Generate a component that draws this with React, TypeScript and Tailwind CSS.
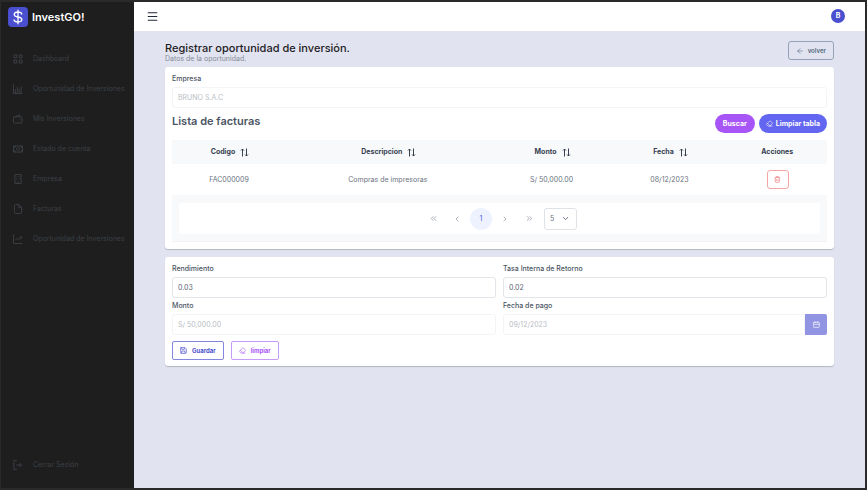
import type { ReactNode } from "react";
import {
  ArrowLeft, ChevronDown, ChevronLeft, ChevronRight, ChevronsLeft, ChevronsRight, Eraser, Menu,
} from "lucide-react";

const icons = {
  grid: "M1 1h3v3H1zM6.500 1h3v3h-3zM1 6.500h3v3H1zM6.500 6.500h3v3h-3z",
  bars: "M.5.500v9.500H10M2.500 9.500V5.500M4.500 9.500V3M6.500 9.500V5M8.500 9.500V2.500",
  wallet: "M1.500 3h7q1 0 1 1v4.500q0 1-1 1h-7q-1 0-1-1V4q0-1 1-1L7 1v2M7 6h1",
  money: "M.5 2h9.500v6.500H.5zM.5 4q2 0 2-2M10 4Q8 4 8 2M.5 6.500q2 0 2 2M10 6.500q-2 0-2 2M5.200 3.700a1.500 1.500 0 1 0 .1 0",
  building: "M2 .5h6.500V10H2zM4 2.500v1M6.500 2.500v1M4 4.700v1M6.500 4.700v1M5.200 7.500V10",
  file: "M2.500.500H6L9 3.500v5q0 1.500-1 1.500H2.500q-1 0-1-1V1.500q0-1 1-1M6 .5v3h3",
  trend: "M.5.500v9.500H10M2.500 6.500l2-2 1.500 1.500L9 3M7 3h2v2",
  exit: "M4 .5H1v9.500h3M3.500 5.200h5.500M7 3.200l2 2-2 2",
  calendar: "M1.500 2h7q1 0 1 1v5.500q0 1-1 1h-7q-1 0-1-1V3q0-1 1-1M.5 5h9M3 .5v2.500M7 .5v2.500",
  save: "M1.500.500H7L9.500 3v5.500q0 1-1 1h-7q-1 0-1-1v-7q0-1 1-1M2.500.500v3h4v-3M2.500 9.500V6h5v3.500",
  trash: "M1 2.500h8M3.500 2.500V.8h3v1.700M2 2.500v6q0 1 1 1h4q1 0 1-1v-6M4 5v2.500M6 5v2.500",
};

function Icon({ name, className, stroke = 1 }: { name: keyof typeof icons; className: string; stroke?: number }) {
  return (
    <svg viewBox="0 0 10.500 10.500" className={className} fill="none" stroke="currentColor" strokeWidth={stroke} strokeLinejoin="round" aria-hidden="true">
      <path d={icons[name]} />
    </svg>
  );
}

const nav: { label: string; icon: keyof typeof icons }[] = [
  { label: "Dashboard", icon: "grid" },
  { label: "Oportunidad de Inversiones", icon: "bars" },
  { label: "Mis Inversiones", icon: "wallet" },
  { label: "Estado de cuenta", icon: "money" },
  { label: "Empresa", icon: "building" },
  { label: "Facturas", icon: "file" },
  { label: "Oportunidad de Inversiones", icon: "trend" },
];

const columns = [
  { label: "Codigo", width: "w-[17.4%]", sortable: true },
  { label: "Descripcion", width: "w-[31.1%]", sortable: true },
  { label: "Monto", width: "w-[18.9%]", sortable: true },
  { label: "Fecha", width: "w-[17.1%]", sortable: true },
  { label: "Acciones", width: "w-[15.5%]", sortable: false },
];

function SortIcon() {
  return (
    <svg viewBox="0 0 9 9" className="size-[9px]" fill="none" stroke="#374151" strokeWidth="1" aria-hidden="true">
      <path d="M2.500 8.500V1M1 2.500 2.500 1 4 2.500M6.500.500V8M5 6.500 6.500 8 8 6.500" />
    </svg>
  );
}

function Field({ id, label, value, disabled, children }: {
  id: string; label: string; value: string; disabled?: boolean; children?: ReactNode;
}) {
  return (
    <div className="flex min-w-0 flex-col gap-[3px]">
      <label htmlFor={id} className="text-[7px] leading-[10px] font-medium text-[#4b5563]">{label}</label>
      <div className="flex h-[21px]">
        <input
          id={id}
          defaultValue={value}
          disabled={disabled}
          className="h-full min-w-0 flex-1 rounded-[3px] border border-[#e2e5e9] bg-white px-[5px] text-[7px] text-[#5b6472] disabled:border-[#f3f4f6] disabled:text-[#b9bdc4]"
        />
        {children}
      </div>
    </div>
  );
}

const pageButton = "flex size-[22px] items-center justify-center rounded-full text-[#8b939f]";

export default function App() {
  return (
    <div className="flex min-h-screen border-y-2 border-r-2 border-l border-[#2a2a2a] bg-[#e1e4f0] font-['Inter','Liberation_Sans',sans-serif] text-[7px] leading-[10px] text-[#6b7280]">
      <aside className="flex w-[133px] shrink-0 flex-col bg-[#1e1e1e] text-[#3c4046]">
        <div className="flex h-[29px] items-center gap-1 pl-[7px]">
          <svg viewBox="0 0 20 20" className="size-5" fill="none" aria-hidden="true">
            <rect width="20" height="20" rx="4" fill="#4a4fcf" />
            <path d="M13.800 7C13.500 5.700 12 5 10 5c-2.300 0-3.800.9-3.800 2.400 0 3.600 7.700 1.600 7.700 5.200 0 1.500-1.600 2.400-3.900 2.400-2.200 0-3.700-.8-4-2.200M10 3.200v13.600" stroke="white" strokeWidth="1.300" strokeLinecap="round" />
          </svg>
          <span className="text-[11px] leading-4 font-semibold text-white">InvestGO!</span>
        </div>
        <nav className="mt-[13px] flex flex-col">
          {nav.map(({ label, icon }, i) => (
            <a key={i} href="#" className="flex h-[30px] items-center gap-[10px] pl-3 whitespace-nowrap">
              <Icon name={icon} className="size-[10px] shrink-0" />
              {label}
            </a>
          ))}
        </nav>
        <a href="#" className="mt-auto mb-2 flex h-[30px] items-center gap-[10px] pl-3">
          <Icon name="exit" className="size-[10px] shrink-0" />
          Cerrar Sesión
        </a>
      </aside>

      <div className="flex min-w-0 flex-1 flex-col">
        <header className="flex h-[29px] items-center justify-between bg-white pr-5 pb-px pl-3">
          <button type="button" aria-label="Menú" className="text-[#1f2937]">
            <Menu className="size-[13px]" strokeWidth={2} />
          </button>
          <span className="flex size-[14px] items-center justify-center rounded-full bg-[#4a4fcf] font-bold text-white">B</span>
        </header>

        <main className="flex flex-col px-[31px] pt-[10px]">
          <div className="flex h-[26px] items-start justify-between">
            <div>
              <h1 className="pt-px text-[11px] leading-[13px] font-medium text-[#1f2024]">Registrar oportunidad de inversión.</h1>
              <p className="leading-[8px] text-[#868b98]">Datos de la oportunidad.</p>
            </div>
            <button type="button" className="flex h-[19px] items-center gap-1 rounded-[3px] border border-[#94a3b8] px-[7px] text-[6px] font-bold text-[#64748b]">
              <ArrowLeft className="size-2" />
              volver
            </button>
          </div>

          <section className="rounded-[3px] bg-white p-[7px] shadow-[0_1px_1px_rgba(0,0,0,0.200)]">
            <Field id="empresa" label="Empresa" value="BRUNO S.A.C" disabled />
            <div className="mt-[6px] mb-[7px] flex h-[19px] justify-between">
              <h2 className="text-[11px] leading-[14px] font-semibold text-[#4b5563]">Lista de facturas</h2>
              <div className="flex gap-1 text-[7px] font-bold text-white">
                <button type="button" className="h-[19px] rounded-full bg-[#a855f7] px-2">Buscar</button>
                <button type="button" className="flex h-[19px] items-center gap-[3px] rounded-full bg-[#6366f1] px-[7px]">
                  <Eraser className="size-[7px]" />
                  Limpiar tabla
                </button>
              </div>
            </div>
            <table className="w-full table-fixed text-center">
              <thead>
                <tr className="h-6 bg-[#f8f9fb] text-[#374151]">
                  {columns.map((c) => (
                    <th key={c.label} className={`${c.width} p-0 pl-[2px] font-bold`}>
                      <span className="flex items-center justify-center gap-[5px]">
                        {c.label}
                        {c.sortable && <SortIcon />}
                      </span>
                    </th>
                  ))}
                </tr>
              </thead>
              <tbody>
                <tr className="h-[31px]">
                  <td>FAC000009</td>
                  <td>Compras de impresoras</td>
                  <td>S/ 50,000.00</td>
                  <td>08/12/2023</td>
                  <td className="p-0 pl-[3px]">
                    <button type="button" aria-label="Eliminar" className="mx-auto flex h-[19px] w-[22px] items-center justify-center rounded-[3px] border border-[#f8a5a5] text-[#ef7777]">
                      <Icon name="trash" className="size-[7px]" />
                    </button>
                  </td>
                </tr>
              </tbody>
            </table>
            <div className="border-b border-[#f1f2f5] bg-[#f8f9fb] px-[7px] pt-2 pb-[7px]">
              <div className="flex h-[31px] items-center justify-center gap-[2px] rounded-[2px] bg-white">
                <button type="button" aria-label="Primera página" className={pageButton}><ChevronsLeft className="size-[9px]" /></button>
                <button type="button" aria-label="Página anterior" className={pageButton}><ChevronLeft className="size-2" /></button>
                <button type="button" className="size-[22px] rounded-full bg-[#eef2ff] text-[#4a5fe0]">1</button>
                <button type="button" aria-label="Página siguiente" className={pageButton}><ChevronRight className="size-2" /></button>
                <button type="button" aria-label="Última página" className={pageButton}><ChevronsRight className="size-[9px]" /></button>
                <span className="ml-[2px] grid h-[22px] w-[33px] items-center rounded-[3px] border border-[#dfe2e7]">
                  <select aria-label="Filas por página" className="col-start-1 row-start-1 h-full w-full appearance-none bg-transparent px-[5px]">
                    <option>5</option>
                  </select>
                  <ChevronDown className="pointer-events-none col-start-1 row-start-1 mr-[6px] size-[9px] justify-self-end" strokeWidth={2.5} />
                </span>
              </div>
            </div>
          </section>

          <form className="mt-2 rounded-[3px] bg-white px-[7px] pt-[7px] pb-[6px] shadow-[0_1px_1px_rgba(0,0,0,0.200)]">
            <div className="grid grid-cols-2 gap-x-[7px] gap-y-[3px]">
              <Field id="rendimiento" label="Rendimiento" value="0.03" />
              <Field id="tir" label="Tasa Interna de Retorno" value="0.02" />
              <Field id="monto" label="Monto" value="S/ 50,000.00" disabled />
              <Field id="fecha" label="Fecha de pago" value="09/12/2023" disabled>
                <button type="button" aria-label="Calendario" className="flex w-[22px] items-center justify-center rounded-r-[2px] bg-[#9194e2] text-white">
                  <Icon name="calendar" className="size-[7px]" />
                </button>
              </Field>
            </div>
            <div className="mt-[6px] flex gap-[7px] text-[6px] font-bold">
              <button type="button" className="flex h-[19px] items-center gap-[5px] rounded-[2px] border border-[#8286e0] px-[7px] text-[#4a4fcf]">
                <Icon name="save" className="size-[7px]" />
                Guardar
              </button>
              <button type="button" className="flex h-[19px] items-center gap-[5px] rounded-[2px] border border-[#c79bf8] px-[7px] text-[#a855f7]">
                <Eraser className="size-[7px]" />
                limpiar
              </button>
            </div>
          </form>
        </main>
      </div>
    </div>
  );
}
